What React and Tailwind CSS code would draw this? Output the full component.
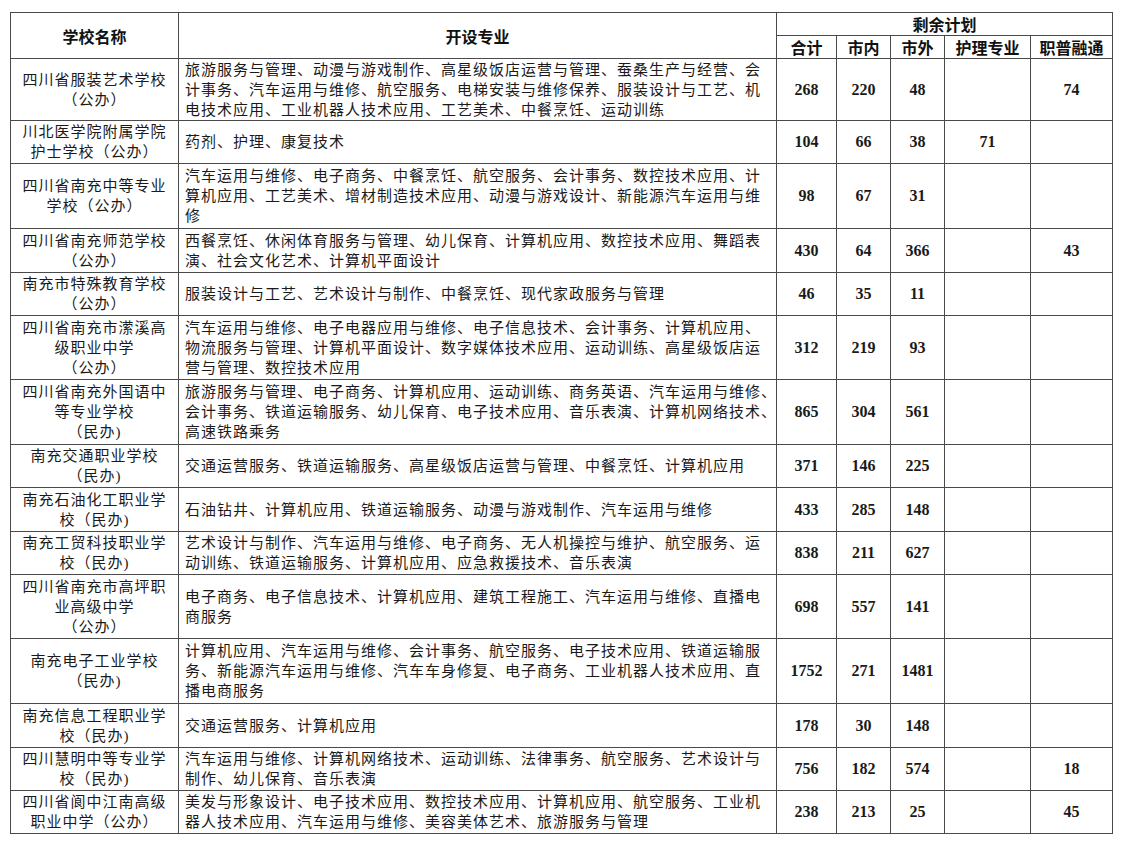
import React from "react";

const rows = [
  {
    h: "h-[62px]",
    name: ["四川省服装艺术学校", "（公办）"],
    majors: [
      "旅游服务与管理、动漫与游戏制作、高星级饭店运营与管理、蚕桑生产与经营、会",
      "计事务、汽车运用与维修、航空服务、电梯安装与维修保养、服装设计与工艺、机",
      "电技术应用、工业机器人技术应用、工艺美术、中餐烹饪、运动训练",
    ],
    n: ["268", "220", "48", "", "74"],
  },
  {
    h: "h-[43px]",
    name: ["川北医学院附属学院", "护士学校（公办）"],
    majors: ["药剂、护理、康复技术"],
    n: ["104", "66", "38", "71", ""],
  },
  {
    h: "h-[65px]",
    name: ["四川省南充中等专业", "学校（公办）"],
    majors: [
      "汽车运用与维修、电子商务、中餐烹饪、航空服务、会计事务、数控技术应用、计",
      "算机应用、工艺美术、增材制造技术应用、动漫与游戏设计、新能源汽车运用与维",
      "修",
    ],
    n: ["98", "67", "31", "", ""],
  },
  {
    h: "h-[44px]",
    name: ["四川省南充师范学校", "（公办）"],
    majors: [
      "西餐烹饪、休闲体育服务与管理、幼儿保育、计算机应用、数控技术应用、舞蹈表",
      "演、社会文化艺术、计算机平面设计",
    ],
    n: ["430", "64", "366", "", "43"],
  },
  {
    h: "h-[43px]",
    name: ["南充市特殊教育学校", "（公办）"],
    majors: ["服装设计与工艺、艺术设计与制作、中餐烹饪、现代家政服务与管理"],
    n: ["46", "35", "11", "", ""],
  },
  {
    h: "h-[64px]",
    name: ["四川省南充市潆溪高", "级职业中学", "（公办）"],
    majors: [
      "汽车运用与维修、电子电器应用与维修、电子信息技术、会计事务、计算机应用、",
      "物流服务与管理、计算机平面设计、数字媒体技术应用、运动训练、高星级饭店运",
      "营与管理、数控技术应用",
    ],
    n: ["312", "219", "93", "", ""],
  },
  {
    h: "h-[65px]",
    name: ["四川省南充外国语中", "等专业学校", "（民办)"],
    majors: [
      "旅游服务与管理、电子商务、计算机应用、运动训练、商务英语、汽车运用与维修、",
      "会计事务、铁道运输服务、幼儿保育、电子技术应用、音乐表演、计算机网络技术、",
      "高速铁路乘务",
    ],
    n: ["865", "304", "561", "", ""],
  },
  {
    h: "h-[43px]",
    name: ["南充交通职业学校", "（民办)"],
    majors: ["交通运营服务、铁道运输服务、高星级饭店运营与管理、中餐烹饪、计算机应用"],
    n: ["371", "146", "225", "", ""],
  },
  {
    h: "h-[44px]",
    name: ["南充石油化工职业学", "校（民办)"],
    majors: ["石油钻井、计算机应用、铁道运输服务、动漫与游戏制作、汽车运用与维修"],
    n: ["433", "285", "148", "", ""],
  },
  {
    h: "h-[43px]",
    name: ["南充工贸科技职业学", "校（民办)"],
    majors: [
      "艺术设计与制作、汽车运用与维修、电子商务、无人机操控与维护、航空服务、运",
      "动训练、铁道运输服务、计算机应用、应急救援技术、音乐表演",
    ],
    n: ["838", "211", "627", "", ""],
  },
  {
    h: "h-[64px]",
    name: ["四川省南充市高坪职", "业高级中学", "（公办）"],
    majors: [
      "电子商务、电子信息技术、计算机应用、建筑工程施工、汽车运用与维修、直播电",
      "商服务",
    ],
    n: ["698", "557", "141", "", ""],
  },
  {
    h: "h-[65px]",
    name: ["南充电子工业学校", "（民办)"],
    majors: [
      "计算机应用、汽车运用与维修、会计事务、航空服务、电子技术应用、铁道运输服",
      "务、新能源汽车运用与维修、汽车车身修复、电子商务、工业机器人技术应用、直",
      "播电商服务",
    ],
    n: ["1752", "271", "1481", "", ""],
  },
  {
    h: "h-[44px]",
    name: ["南充信息工程职业学", "校（民办)"],
    majors: ["交通运营服务、计算机应用"],
    n: ["178", "30", "148", "", ""],
  },
  {
    h: "h-[43px]",
    name: ["四川慧明中等专业学", "校（民办)"],
    majors: [
      "汽车运用与维修、计算机网络技术、运动训练、法律事务、航空服务、艺术设计与",
      "制作、幼儿保育、音乐表演",
    ],
    n: ["756", "182", "574", "", "18"],
  },
  {
    h: "h-[43px]",
    name: ["四川省阆中江南高级", "职业中学（公办）"],
    majors: [
      "美发与形象设计、电子技术应用、数控技术应用、计算机应用、航空服务、工业机",
      "器人技术应用、汽车运用与维修、美容美体艺术、旅游服务与管理",
    ],
    n: ["238", "213", "25", "", "45"],
  },
];

const cell = "border border-[#4a4a4a] p-0 align-middle";
const head =
  "border border-[#4a4a4a] p-0 align-middle text-center font-['Noto_Sans_CJK_SC',sans-serif] font-bold text-[16px] leading-[20px] text-[#111]";

export default function App() {
  return (
    <div className="bg-white w-[1124px] h-[843px] pt-[12px] pl-[10px]">
      <table className="table-fixed border-collapse w-[1102px] text-[#1a1a1a]">
        <colgroup>
          <col className="w-[168px]" />
          <col className="w-[598px]" />
          <col className="w-[60px]" />
          <col className="w-[54px]" />
          <col className="w-[54px]" />
          <col className="w-[86px]" />
          <col className="w-[82px]" />
        </colgroup>
        <thead>
          <tr className="h-[23px]">
            <th rowSpan={2} className={head}>
              学校名称
            </th>
            <th rowSpan={2} className={head}>
              开设专业
            </th>
            <th colSpan={5} className={head}>
              剩余计划
            </th>
          </tr>
          <tr className="h-[23px]">
            <th className={head}>合计</th>
            <th className={head}>市内</th>
            <th className={head}>市外</th>
            <th className={head}>护理专业</th>
            <th className={head}>职普融通</th>
          </tr>
        </thead>
        <tbody>
          {rows.map((r, i) => (
            <tr key={i} className={r.h}>
              <td
                className={
                  cell +
                  " text-center font-['Liberation_Serif','Noto_Sans_CJK_SC',serif] text-[15px] leading-[20px] tracking-[1px]"
                }
              >
                {r.name.map((l, j) => (
                  <div key={j} className="whitespace-nowrap">
                    {l}
                  </div>
                ))}
              </td>
              <td
                className={
                  cell +
                  " pl-[6px] text-left font-['Liberation_Serif','Noto_Sans_CJK_SC',serif] text-[15px] leading-[20px] tracking-[1px]"
                }
              >
                {r.majors.map((l, j) => (
                  <div key={j} className="whitespace-nowrap">
                    {l}
                  </div>
                ))}
              </td>
              {r.n.map((v, j) => (
                <td
                  key={j}
                  className={
                    cell +
                    " text-center font-['Liberation_Serif',serif] font-bold text-[16px] leading-[20px]"
                  }
                >
                  {v}
                </td>
              ))}
            </tr>
          ))}
        </tbody>
      </table>
    </div>
  );
}
